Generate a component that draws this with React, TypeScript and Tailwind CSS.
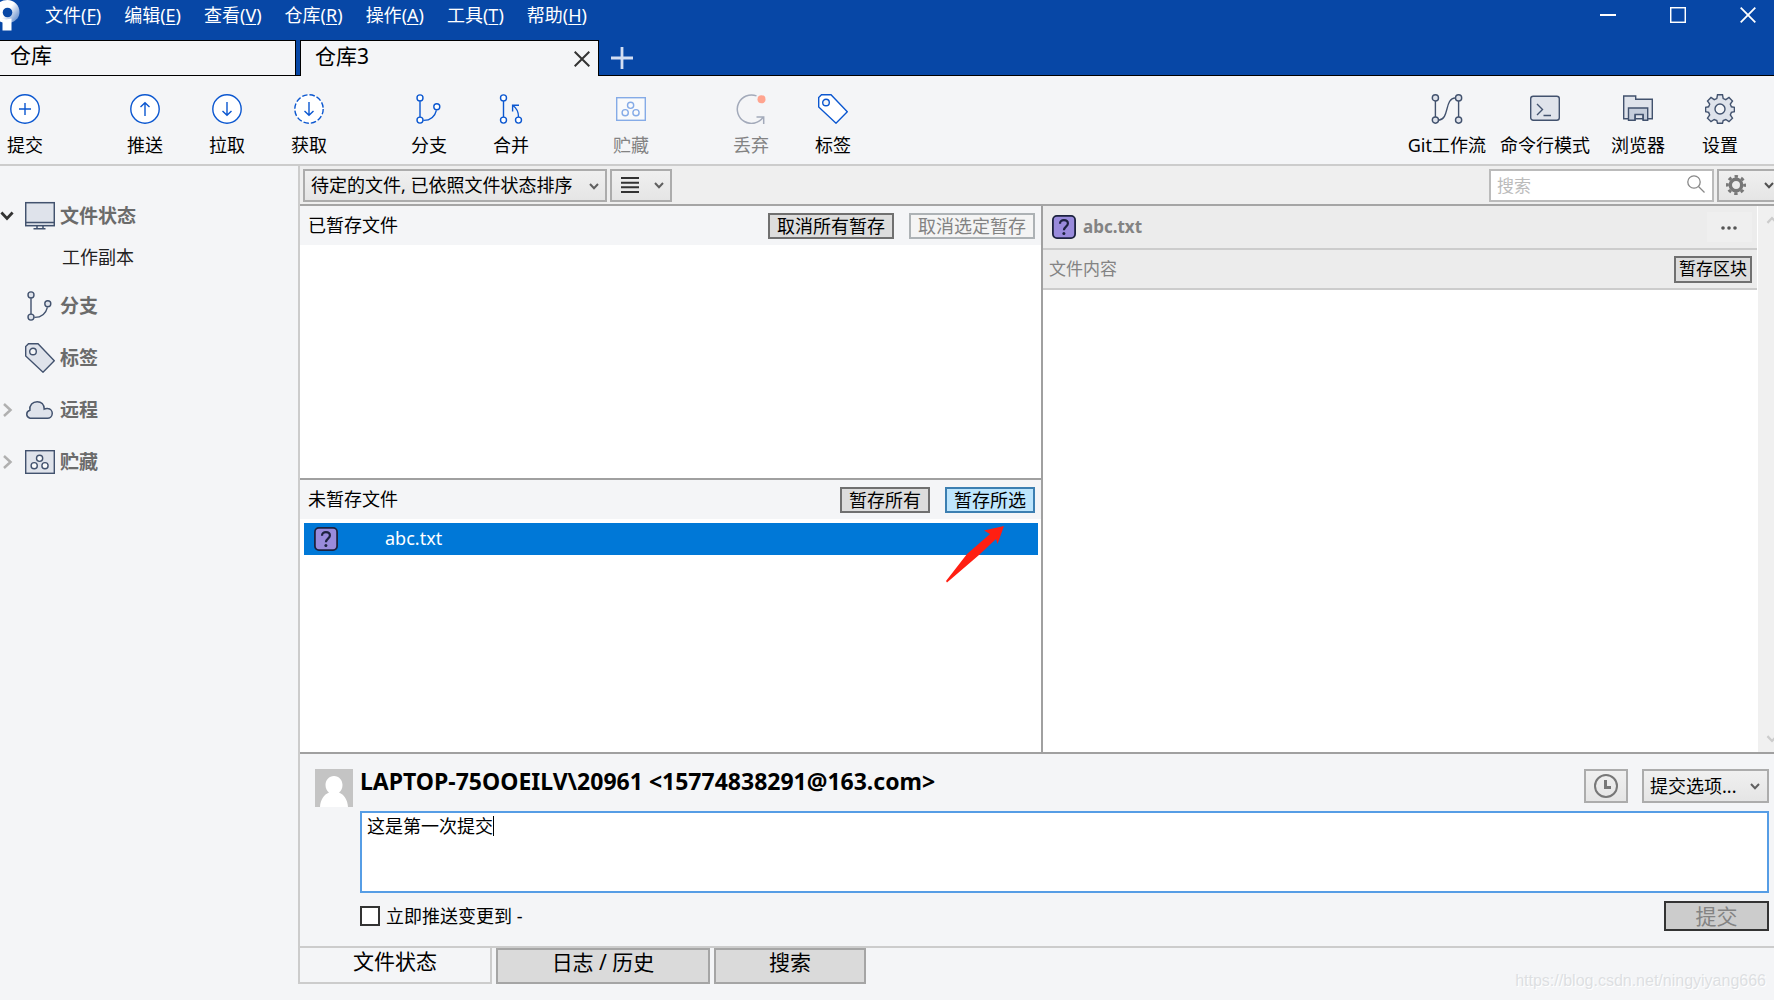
import { useState } from "react"
import type { ReactNode } from "react"

const menus = [
  { label: "文件", accel: "F" },
  { label: "编辑", accel: "E" },
  { label: "查看", accel: "V" },
  { label: "仓库", accel: "R" },
  { label: "操作", accel: "A" },
  { label: "工具", accel: "T" },
  { label: "帮助", accel: "H" },
]

function Chevron({ className }: { className: string }) {
  return (
    <svg viewBox="0 0 10 7" fill="none" strokeWidth="2" className={className}>
      <path d="M1 1l4 4.2L9 1" />
    </svg>
  )
}

function CommitIcon() {
  return (
    <svg viewBox="0 0 30 30" className="size-[30px]" fill="#fff" stroke="#0b57d0" strokeWidth="1.4">
      <circle cx="15" cy="15" r="14.2" />
      <path d="M15 9v12M9 15h12" />
    </svg>
  )
}

function PushIcon() {
  return (
    <svg viewBox="0 0 30 30" className="size-[30px]" fill="none" stroke="#0b57d0" strokeWidth="1.4">
      <circle cx="15" cy="15" r="14.2" fill="#fff" />
      <path d="M15 22V9M10.5 13L15 8.7l4.5 4.3" />
    </svg>
  )
}

function PullIcon({ dashed = false }: { dashed?: boolean }) {
  return (
    <svg viewBox="0 0 30 30" className="size-[30px]" fill="none" stroke="#0b57d0" strokeWidth="1.4">
      <circle cx="15" cy="15" r="14.2" fill="#fff" strokeDasharray={dashed ? "5.4 2.04" : undefined} />
      <path d="M15 8v13M10.5 17l4.5 4.3 4.5-4.3" />
    </svg>
  )
}

function BranchIcon({ stroke, fill }: { stroke: string; fill: string }) {
  return (
    <svg viewBox="0 0 30 30" className="size-[30px]" fill="none" stroke={stroke} strokeWidth="1.4">
      <path d="M6 7v16M9.4 26.4C17 26.5 21 22 22.4 16.4" />
      <circle cx="6" cy="3.9" r="3" fill={fill} />
      <circle cx="6" cy="26.1" r="3" fill={fill} />
      <circle cx="22.8" cy="12.8" r="3" fill={fill} />
    </svg>
  )
}

function MergeIcon() {
  return (
    <svg viewBox="0 0 30 30" className="size-[30px]" fill="none" stroke="#0b57d0" strokeWidth="1.4">
      <path d="M7.5 7v16M22.5 23c0-5-1.5-8.5-5.2-11.2M16.6 17.5v-6.3h6.4" />
      <circle cx="7.5" cy="3.9" r="3" fill="#fff" />
      <circle cx="7.5" cy="26.1" r="3" fill="#fff" />
      <circle cx="22.5" cy="26.1" r="3" fill="#fff" />
    </svg>
  )
}

function StashIcon({ stroke, fill }: { stroke: string; fill: string }) {
  return (
    <svg viewBox="0 0 30 30" className="size-[30px]" fill="none" stroke={stroke} strokeWidth="1.4">
      <rect x="0.7" y="3.7" width="28.6" height="22.6" fill={fill} />
      <circle cx="14.6" cy="11.3" r="3.1" fill="#fafbfc" />
      <circle cx="9.2" cy="18.7" r="3.1" fill="#fafbfc" />
      <circle cx="20" cy="18.7" r="3.1" fill="#fafbfc" />
    </svg>
  )
}

function DiscardIcon() {
  return (
    <svg viewBox="0 0 30 30" className="size-[30px]" fill="none" stroke="#a3aaba" strokeWidth="1.5">
      <path d="M20.5 1.9A14.2 14.2 0 1 0 27.2 23.2M20.5 23h7.2v7" />
      <circle cx="25.5" cy="5.3" r="4" fill="#ffa48f" stroke="none" />
    </svg>
  )
}

function TagIcon({ stroke, fill }: { stroke: string; fill: string }) {
  return (
    <svg viewBox="0 0 30 30" className="size-[30px]" fill={fill} stroke={stroke} strokeWidth="1.4">
      <path d="M3.5.7h9.5L29.3 17.8 18 29.2.7 13V3.5z" />
      <circle cx="8" cy="8.5" r="3.3" fill="#f4f5f7" />
    </svg>
  )
}

function FlowIcon() {
  return (
    <svg viewBox="0 0 32 30" className="h-[30px] w-8" fill="none" stroke="#42526e" strokeWidth="1.4">
      <path d="M4.4 7v16M27.6 7v16M7.6 26.2C19 25 13 4.5 24.4 3.9" />
      <circle cx="4.4" cy="3.9" r="3.1" fill="#dfe3eb" />
      <circle cx="4.4" cy="26.1" r="3.1" fill="#dfe3eb" />
      <circle cx="27.6" cy="3.9" r="3.1" fill="#dfe3eb" />
      <circle cx="27.6" cy="26.1" r="3.1" fill="#dfe3eb" />
    </svg>
  )
}

function TerminalIcon() {
  return (
    <svg viewBox="0 0 30 30" className="size-[30px]" fill="none" stroke="#42526e" strokeWidth="1.4">
      <rect x="0.7" y="2.2" width="28.6" height="24" rx="2.5" fill="#dfe3eb" />
      <path d="M7 10l5.5 5.5L7 21M13.5 21.5H21" />
    </svg>
  )
}

function FolderIcon() {
  return (
    <svg viewBox="0 0 30 30" className="size-[30px]" fill="#dfe3eb" stroke="#42526e" strokeWidth="1.4">
      <path d="M.7 2h12v3.2h16.6v19.6H.7z" />
      <path d="M5.5 14h19.2v12.3h-4.6v-5.8h-8v5.8H5.500z" fill="#c5cddb" />
      <path d="M12.1 20.5v5.8M20.1 20.5v5.8" />
    </svg>
  )
}

function SettingsIcon() {
  return (
    <svg viewBox="0 0 30 30" className="size-[30px]" fill="#dfe3eb" stroke="#42526e" strokeWidth="1.4">
      <path d="M12.5.8h5l.7 3.8 2.6 1.1 3.2-2.2 3.5 3.5-2.2 3.2 1.1 2.6 3 .6v4.2l-3 .8-1.1 2.6 2.2 3.2-3.5 3.5-3.2-2.2-2.6 1.1-.7 2.700h-5l-.7-2.7-2.6-1.1L6 27.700l-3.500-3.500L4.700 21l-1.100-2.600-3-.8v-4.200l3-.6 1.100-2.600L2.500 7 6 3.500l3.200 2.200 2.600-1.100z" />
      <circle cx="15" cy="15" r="5" fill="#f4f5f7" />
    </svg>
  )
}

function MonitorIcon() {
  return (
    <svg viewBox="0 0 30 30" className="size-[30px]" fill="#dfe3eb" stroke="#42526e" strokeWidth="1.5">
      <rect x="0.7" y="1.7" width="28.6" height="23" />
      <path d="M1 21.5h28M12 25v2.5M18 25v2.5M8.5 27.8h12" />
    </svg>
  )
}

function CloudIcon() {
  return (
    <svg viewBox="0 0 30 30" className="size-[30px]" fill="#dfe3eb" stroke="#42526e" strokeWidth="1.5">
      <path d="M5 23.2h17a4.800 4.800 0 0 0 .8-9.700c-1.500-.2-2.500 0-3.600.6 0-4.700-3-7.400-7-7.400-4.500 0-8 3.600-7.300 8.500a4.100 4.100 0 0 0 .1 8z" />
    </svg>
  )
}

function UnknownBadge() {
  return (
    <svg viewBox="0 0 24 24" className="size-6 shrink-0" fill="none" stroke="#1d2340" strokeWidth="1.8">
      <rect x="0.9" y="0.9" width="22.2" height="22.2" rx="4" fill="#998bdc" />
      <path d="M8 8.8c0-2.400 1.600-3.700 3.900-3.700 2.400 0 4 1.300 4 3.500 0 3-4 3.100-4 6.600" strokeWidth="2.2" />
      <circle cx="11.9" cy="18.4" r="1.5" fill="#1d2340" stroke="none" />
    </svg>
  )
}

function ToolButton({ label, disabled, children }: { label: string; disabled?: boolean; children: ReactNode }) {
  return (
    <button
      disabled={disabled}
      className="flex w-[50px] flex-col items-center gap-[9px] whitespace-nowrap leading-6 disabled:text-[#838383]"
    >
      {children}
      {label}
    </button>
  )
}

function SideTool({ label, children }: { label: string; children: ReactNode }) {
  return (
    <button className="flex min-w-[68px] flex-col items-center gap-[9px] whitespace-nowrap leading-6">
      {children}
      {label}
    </button>
  )
}

function SidebarItem({ label, arrow, children }: { label: string; arrow?: "open" | "closed"; children: ReactNode }) {
  return (
    <button className="flex h-[52px] w-full items-center text-[19px] font-bold text-[#6b6b6b]">
      <span className="flex w-[25px] shrink-0">
        {arrow === "open" && <Chevron className="h-[10px] w-[14px] stroke-[#333]" />}
        {arrow === "closed" && (
          <svg viewBox="0 0 12 14" className="ml-[2px] h-[14px] w-3" fill="none" stroke="#b0b0b0" strokeWidth="2.5">
            <path d="M2 1l6.5 6L2 13" />
          </svg>
        )}
      </span>
      {children}
      <span className="ml-[5px]">{label}</span>
    </button>
  )
}

export default function App() {
  const [message, setMessage] = useState("这是第一次提交")
  const [pushNow, setPushNow] = useState(false)
  const [query, setQuery] = useState("")

  return (
    <div className="flex min-h-screen flex-col overflow-hidden bg-[#f4f5f7] font-['Noto_Sans','Noto_Sans_CJK_SC',sans-serif] text-[18px] leading-6 text-black">
      {/* Title bar */}
      <header className="bg-[#0747a6] text-white">
        <div className="flex h-10 items-start">
          <svg viewBox="0 0 20 31" className="h-[31px] w-5">
            <defs>
              <linearGradient id="logo" x1="0.55" y1="0.3" x2="1" y2="0.7">
                <stop offset="0" stopColor="#fff" />
                <stop offset="1" stopColor="#6f95d0" />
              </linearGradient>
            </defs>
            <path fill="url(#logo)" d="M7.500 0C14 0 19.500 5 19.500 12c0 5-3 8.500-8 10.500L0 21V2C2 .8 4.500 0 7.500 0z" />
            <path fill="#fff" d="M0 18l6 1.500 5.500-1v12H2.500v-8L0 21.500z" />
            <circle cx="7.5" cy="12.5" r="4.8" fill="#0747a6" />
          </svg>
          <nav className="flex gap-[23px] pt-[3px] pl-[25px]">
            {menus.map((m) => (
              <button key={m.accel}>
                {m.label}(<u className="underline-offset-2">{m.accel}</u>)
              </button>
            ))}
          </nav>
          <div className="ml-auto flex items-center gap-[54px] pt-[7px] pr-[18px]">
            <button aria-label="最小化">
              <svg viewBox="0 0 16 16" className="size-4" stroke="#fff" strokeWidth="2">
                <path d="M0 8h16" />
              </svg>
            </button>
            <button aria-label="最大化">
              <svg viewBox="0 0 16 16" className="size-4" fill="none" stroke="#fff" strokeWidth="1.5">
                <rect x="0.7" y="0.7" width="14.6" height="14.6" />
              </svg>
            </button>
            <button aria-label="关闭">
              <svg viewBox="0 0 16 16" className="size-4" stroke="#fff" strokeWidth="1.8">
                <path d="M.7.7l14.6 14.6M15.3.7L.7 15.3" />
              </svg>
            </button>
          </div>
        </div>
        <div className="flex h-9 text-[21px] leading-7 text-black">
          <button className="w-[296px] border-y border-r border-black bg-[#f4f5f7] pb-[6px] pl-[10px] text-left">仓库</button>
          <div className="w-1 border-b border-black" />
          <div className="flex w-[299px] items-center border-x border-t border-black bg-[#f4f5f7] pr-2 pl-[14px]">
            <button className="flex-1 pb-[6px] text-left">仓库3</button>
            <button aria-label="关闭标签">
              <svg viewBox="0 0 16 16" className="size-4" stroke="#333" strokeWidth="2">
                <path d="M.7.7l14.6 14.6M15.3.7L.7 15.3" />
              </svg>
            </button>
          </div>
          <div className="flex flex-1 items-center border-b border-black pl-3">
            <button aria-label="新建标签">
              <svg viewBox="0 0 22 22" className="size-[22px]" stroke="#d3def2" strokeWidth="2.8">
                <path d="M11 0v22M0 11h22" />
              </svg>
            </button>
          </div>
        </div>
      </header>

      {/* Toolbar */}
      <div className="flex h-[90px] items-start justify-between border-b-2 border-[#ccc] pt-[18px] pr-5">
        <div className="flex gap-[70px]">
          <ToolButton label="提交"><CommitIcon /></ToolButton>
          <div className="flex gap-8">
            <ToolButton label="推送"><PushIcon /></ToolButton>
            <ToolButton label="拉取"><PullIcon /></ToolButton>
            <ToolButton label="获取"><PullIcon dashed /></ToolButton>
          </div>
          <div className="flex gap-8">
            <ToolButton label="分支"><BranchIcon stroke="#0b57d0" fill="#fff" /></ToolButton>
            <ToolButton label="合并"><MergeIcon /></ToolButton>
          </div>
          <ToolButton label="贮藏" disabled><StashIcon stroke="#85abe7" fill="#f9fafb" /></ToolButton>
          <div className="flex gap-8">
            <ToolButton label="丢弃" disabled><DiscardIcon /></ToolButton>
            <ToolButton label="标签"><TagIcon stroke="#0b57d0" fill="#fff" /></ToolButton>
          </div>
        </div>
        <div className="flex gap-[14px]">
          <SideTool label="Git工作流"><FlowIcon /></SideTool>
          <SideTool label="命令行模式"><TerminalIcon /></SideTool>
          <SideTool label="浏览器"><FolderIcon /></SideTool>
          <SideTool label="设置"><SettingsIcon /></SideTool>
        </div>
      </div>

      <div className="flex flex-1 pb-4">
        {/* Sidebar */}
        <aside className="w-[300px] shrink-0 border-r-2 border-[#ccc] pt-6">
          <SidebarItem label="文件状态" arrow="open"><MonitorIcon /></SidebarItem>
          <button className="block pt-[3px] pb-[11px] pl-[62px] text-[#222]">工作副本</button>
          <SidebarItem label="分支"><BranchIcon stroke="#42526e" fill="#dfe3eb" /></SidebarItem>
          <SidebarItem label="标签"><TagIcon stroke="#42526e" fill="#dfe3eb" /></SidebarItem>
          <SidebarItem label="远程" arrow="closed"><CloudIcon /></SidebarItem>
          <SidebarItem label="贮藏" arrow="closed"><StashIcon stroke="#42526e" fill="#dfe3eb" /></SidebarItem>
        </aside>

        <main className="flex min-w-0 flex-1 flex-col">
          {/* Filter bar */}
          <div className="flex h-10 items-center border-b-2 border-[#a5a5a5] bg-[#efefef] pl-[3px]">
            <div className="relative">
              <select
                aria-label="文件排序"
                className="h-[33px] w-[304px] appearance-none border-2 border-[#acacac] bg-linear-to-b from-[#f0f0f0] to-[#e5e5e5] pl-[6px]"
              >
                <option>待定的文件, 已依照文件状态排序</option>
              </select>
              <Chevron className="pointer-events-none absolute top-[14px] right-2 h-[7px] w-[10px] stroke-[#606060]" />
            </div>
            <button
              aria-label="视图"
              className="ml-[3px] flex h-[33px] w-[62px] items-center justify-between border-2 border-[#acacac] bg-linear-to-b from-[#f0f0f0] to-[#e5e5e5] pr-[6px] pl-[9px]"
            >
              <svg viewBox="0 0 18 16" className="h-4 w-[18px]" stroke="#333" strokeWidth="2">
                <path d="M0 1h18M0 5.7h18M0 10.3h18M0 15h18" />
              </svg>
              <Chevron className="h-[7px] w-[10px] stroke-[#606060]" />
            </button>
            <div className="relative ml-auto">
              <input
                aria-label="搜索"
                placeholder="搜索"
                value={query}
                onChange={(e) => setQuery(e.target.value)}
                className="h-[33px] w-[225px] border-2 border-[#bbb] bg-white pr-9 pl-[6px] text-[17px] placeholder:text-[#bbb]"
              />
              <svg viewBox="0 0 18 18" className="absolute top-[6px] right-[9px] size-[18px]" fill="none" stroke="#888" strokeWidth="1.3">
                <circle cx="7" cy="7" r="6.2" />
                <path d="M11.5 11.5l6 6" />
              </svg>
            </div>
            <button
              aria-label="选项"
              className="ml-[3px] flex h-[33px] w-[57px] items-center justify-between border-y-2 border-l-2 border-[#acacac] bg-linear-to-b from-[#f0f0f0] to-[#e5e5e5] pl-[7px]"
            >
              <svg viewBox="0 0 20 20" className="size-5" fill="none" stroke="#777">
                <circle cx="10" cy="10" r="5.7" strokeWidth="3.4" />
                <circle cx="10" cy="10" r="8.6" strokeWidth="2.8" strokeDasharray="3.4 3.354" strokeDashoffset="1.7" />
              </svg>
              <Chevron className="h-[7px] w-[10px] stroke-[#505050]" />
            </button>
          </div>

          <div className="flex flex-1">
            {/* File lists */}
            <div className="flex min-w-0 flex-[741] flex-col border-r-2 border-[#a0a0a0]">
              <section className="flex flex-1 flex-col border-b-2 border-[#a0a0a0] bg-white">
                <div className="flex h-[39px] items-center gap-[15px] bg-[#f4f5f7] pr-[6px] pl-2">
                  <h2 className="mr-auto pb-[2px]">已暂存文件</h2>
                  <button className="h-[26px] border-2 border-[#707070] bg-[#ddd] px-[7px] leading-[22px]">取消所有暂存</button>
                  <button disabled className="h-[26px] border-2 border-[#adb2b5] bg-[#f4f4f4] px-[7px] leading-[22px] text-[#838383]">
                    取消选定暂存
                  </button>
                </div>
              </section>
              <section className="flex flex-1 flex-col bg-white">
                <div className="flex h-[39px] items-center gap-[15px] bg-[#f4f5f7] pr-[6px] pl-2">
                  <h2 className="mr-auto pb-[2px]">未暂存文件</h2>
                  <button className="h-[26px] border-2 border-[#707070] bg-[#ddd] px-[7px] leading-[22px]">暂存所有</button>
                  <button className="h-[26px] border-2 border-[#3c7fb1] bg-[#bee6fd] px-[7px] leading-[22px]">暂存所选</button>
                </div>
                <div className="relative mr-[3px] ml-1 mt-1 flex h-8 items-center bg-[#0078d7] pl-[10px] text-white">
                  <UnknownBadge />
                  <span className="ml-[47px] pb-[2px]">abc.txt</span>
                  <svg viewBox="0 0 60 58" className="absolute top-[3px] right-[33px] h-[58px] w-[60px]" fill="#ff1f12">
                    <path d="M59 0L39 4.500l6 3.500-23 20L1 55l1 1.500L34 29l17-16 1.500 5z" />
                  </svg>
                </div>
              </section>
            </div>

            {/* Diff view */}
            <div className="flex min-w-0 flex-[731]">
              <div className="flex min-w-0 flex-1 flex-col bg-white">
                <div className="flex h-11 items-center border-b-2 border-[#ccc] bg-[#ececec] pr-[5px] pl-[9px]">
                  <UnknownBadge />
                  <span className="ml-[7px] text-[17px] font-bold text-[#838383]">abc.txt</span>
                  <button aria-label="更多" className="ml-auto flex h-[30px] w-[45px] items-center justify-center bg-[#efefef] pt-[2px] pr-[2px]">
                    <svg viewBox="0 0 16 4" className="h-1 w-4" fill="#555">
                      <circle cx="2" cy="2" r="1.8" />
                      <circle cx="8" cy="2" r="1.8" />
                      <circle cx="14" cy="2" r="1.8" />
                    </svg>
                  </button>
                </div>
                <div className="flex h-10 items-center justify-between border-b-2 border-[#ccc] bg-[#ececec] pr-[5px] pl-[6px] text-[17px]">
                  <span className="text-[#838383]">文件内容</span>
                  <button className="h-[27px] border-2 border-[#707070] bg-[#ddd] px-[3px] leading-[22px]">暂存区块</button>
                </div>
              </div>
              <div className="flex w-[17px] shrink-0 flex-col items-end justify-between overflow-hidden border-l border-white bg-[#f0f0f0] pt-[10px] pb-[9px]">
                <Chevron className="-mr-1 h-2 w-3 rotate-180 stroke-[#ccc]" />
                <Chevron className="-mr-1 h-2 w-3 stroke-[#ccc]" />
              </div>
            </div>
          </div>

          {/* Commit form */}
          <form className="flex border-t-2 border-b-2 border-t-[#a0a0a0] border-b-[#ccc] pt-[15px] pr-[5px] pb-[15px] pl-[15px]">
            <svg viewBox="0 0 38 38" className="size-[38px] shrink-0" fill="#fff">
              <path fill="#c4c4c4" d="M0 0h38v38H0z" />
              <path d="M19 7c5 0 8.5 4 8.5 9 0 3.5-1.5 6-3.500 7.500 5 2 8.500 7 9 14.500H5c.5-7.500 4-12.500 9-14.500-2-1.500-3.500-4-3.500-7.500 0-5 3.500-9 8.500-9z" />
            </svg>
            <div className="ml-[7px] min-w-0 flex-1">
              <div className="flex h-[42px] items-start">
                <span className="text-[23px] font-bold">{"LAPTOP-75OOEILV\\20961 <15774838291@163.com>"}</span>
                <button
                  type="button"
                  aria-label="最近的提交信息"
                  className="ml-auto flex h-[34px] w-11 items-center justify-center border-2 border-[#acacac] bg-linear-to-b from-[#f0f0f0] to-[#e5e5e5]"
                >
                  <svg viewBox="0 0 24 24" className="size-6" fill="none" stroke="#777" strokeWidth="2">
                    <circle cx="12" cy="12" r="11" />
                    <path d="M11.500 6v7.500H17" strokeWidth="3" />
                  </svg>
                </button>
                <div className="relative ml-[14px]">
                  <select
                    aria-label="提交选项"
                    className="h-[34px] w-[127px] appearance-none border-2 border-[#acacac] bg-linear-to-b from-[#f0f0f0] to-[#e5e5e5] pl-[6px]"
                  >
                    <option>提交选项...</option>
                  </select>
                  <Chevron className="pointer-events-none absolute top-[14px] right-[9px] h-[7px] w-[10px] stroke-[#606060]" />
                </div>
              </div>
              <div className="relative">
                <textarea
                  aria-label="提交信息"
                  value={message}
                  onChange={(e) => setMessage(e.target.value)}
                  className="block h-[82px] w-full resize-none border-2 border-[#569de5] bg-white px-[5px] py-[2px] leading-[22px]"
                />
                <span className="absolute top-[5px] left-[133px] h-5 w-px bg-black" />
              </div>
              <div className="flex items-center justify-between pt-2">
                <label className="flex items-center gap-[6px]">
                  <input
                    type="checkbox"
                    checked={pushNow}
                    onChange={(e) => setPushNow(e.target.checked)}
                    className="size-5 appearance-none border-2 border-[#333] bg-white checked:bg-[#333]"
                  />
                  立即推送变更到 -
                </label>
                <button disabled className="h-[30px] w-[105px] border-2 border-[#333] bg-[#ccc] text-[21px] text-[#838383]">
                  提交
                </button>
              </div>
            </div>
          </form>

          {/* View tabs */}
          <div className="flex h-9 gap-1 text-[21px] leading-6">
            <button className="w-[192px] border-r-2 border-b-2 border-[#ccc] pb-[9px]">文件状态</button>
            <button className="w-[214px] border-2 border-[#a5a5a5] bg-[#dadada] pb-2">日志 / 历史</button>
            <button className="w-[152px] border-2 border-[#a5a5a5] bg-[#dadada] pb-2">搜索</button>
            <span className="ml-auto pt-[21px] pr-2 font-['Liberation_Sans',sans-serif] text-[16px] text-[#dddfe2] [text-shadow:1px_1px_0_#fff]">
              https://blog.csdn.net/ningyiyang666
            </span>
          </div>
        </main>
      </div>
    </div>
  )
}
